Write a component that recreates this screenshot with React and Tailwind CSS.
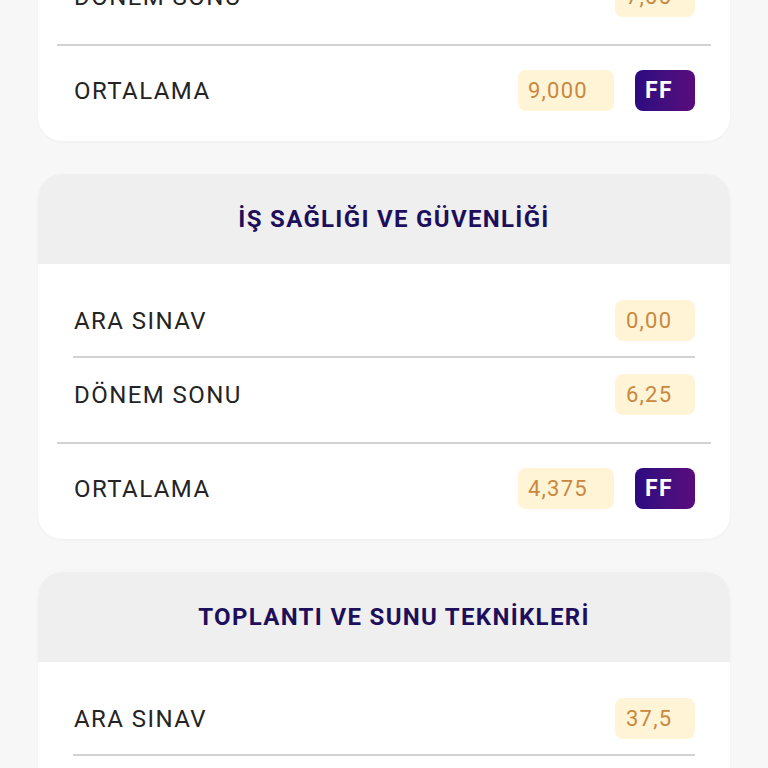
import React from "react";

const courses = [
  { title: "TEMEL BİLGİ TEKNOLOJİLERİ", ara: "13,6", donem: "7,00", ort: "9,000", harf: "FF" },
  { title: "İŞ SAĞLIĞI VE GÜVENLİĞİ", ara: "0,00", donem: "6,25", ort: "4,375", harf: "FF" },
  { title: "TOPLANTI VE SUNU TEKNİKLERİ", ara: "37,5", donem: "20,0", ort: "25,25", harf: "FF" },
];

function Value({ children, wide }) {
  return (
    <div
      className={
        (wide ? "w-[96px] pl-[10px] " : "w-[80px] pl-[11px] ") +
        "h-[41px] flex items-center rounded-[8px] bg-[#fff4d6] text-[#c8893f] text-[22px] tracking-[0.055em] leading-none"
      }
    >
      {children}
    </div>
  );
}

function Card({ c }) {
  return (
    <div className="rounded-[24px] bg-white overflow-hidden shadow-[0_1px_3px_rgba(0,0,0,0.04)]">
      <div className="h-[90px] bg-[#efefef] flex items-center justify-center pl-5">
        <span className="text-[24px] font-bold text-[#1e0f5c] tracking-[0.055em]">{c.title}</span>
      </div>
      <div className="pt-[36px] pb-[30px]">
        <div className="px-[35px] flex items-center justify-between">
          <span className="pl-px text-[24px] text-[#242424] tracking-[0.06em]">ARA SINAV</span>
          <Value>{c.ara}</Value>
        </div>
        <div className="mx-[35px] mt-[15px] h-[2px] bg-[#d2d2d2]" />
        <div className="mt-[16px] px-[35px] flex items-center justify-between">
          <span className="pl-px text-[24px] text-[#242424] tracking-[0.06em]">DÖNEM SONU</span>
          <Value>{c.donem}</Value>
        </div>
        <div className="mx-[19px] mt-[27px] h-[2px] bg-[#d2d2d2]" />
        <div className="mt-[24px] px-[35px] flex items-center justify-between">
          <span className="pl-px text-[24px] text-[#242424] tracking-[0.06em]">ORTALAMA</span>
          <div className="flex items-center gap-[21px]">
            <Value wide>{c.ort}</Value>
            <div className="w-[60px] h-[41px] flex items-center pl-[10px] rounded-[8px] bg-gradient-to-r from-[#2c0a80] to-[#5a0a7c] text-white text-[23px] font-bold tracking-[0.06em] leading-none">
              {c.harf}
            </div>
          </div>
        </div>
      </div>
    </div>
  );
}

export default function App() {
  return (
    <div className="h-[768px] overflow-hidden bg-[#f7f7f7]" style={{ fontFamily: "Roboto, 'Noto Sans', sans-serif" }}>
      <div className="mt-[-224px] px-[38px] flex flex-col gap-[33px]">
        {courses.map((c) => (
          <Card key={c.title} c={c} />
        ))}
      </div>
    </div>
  );
}
